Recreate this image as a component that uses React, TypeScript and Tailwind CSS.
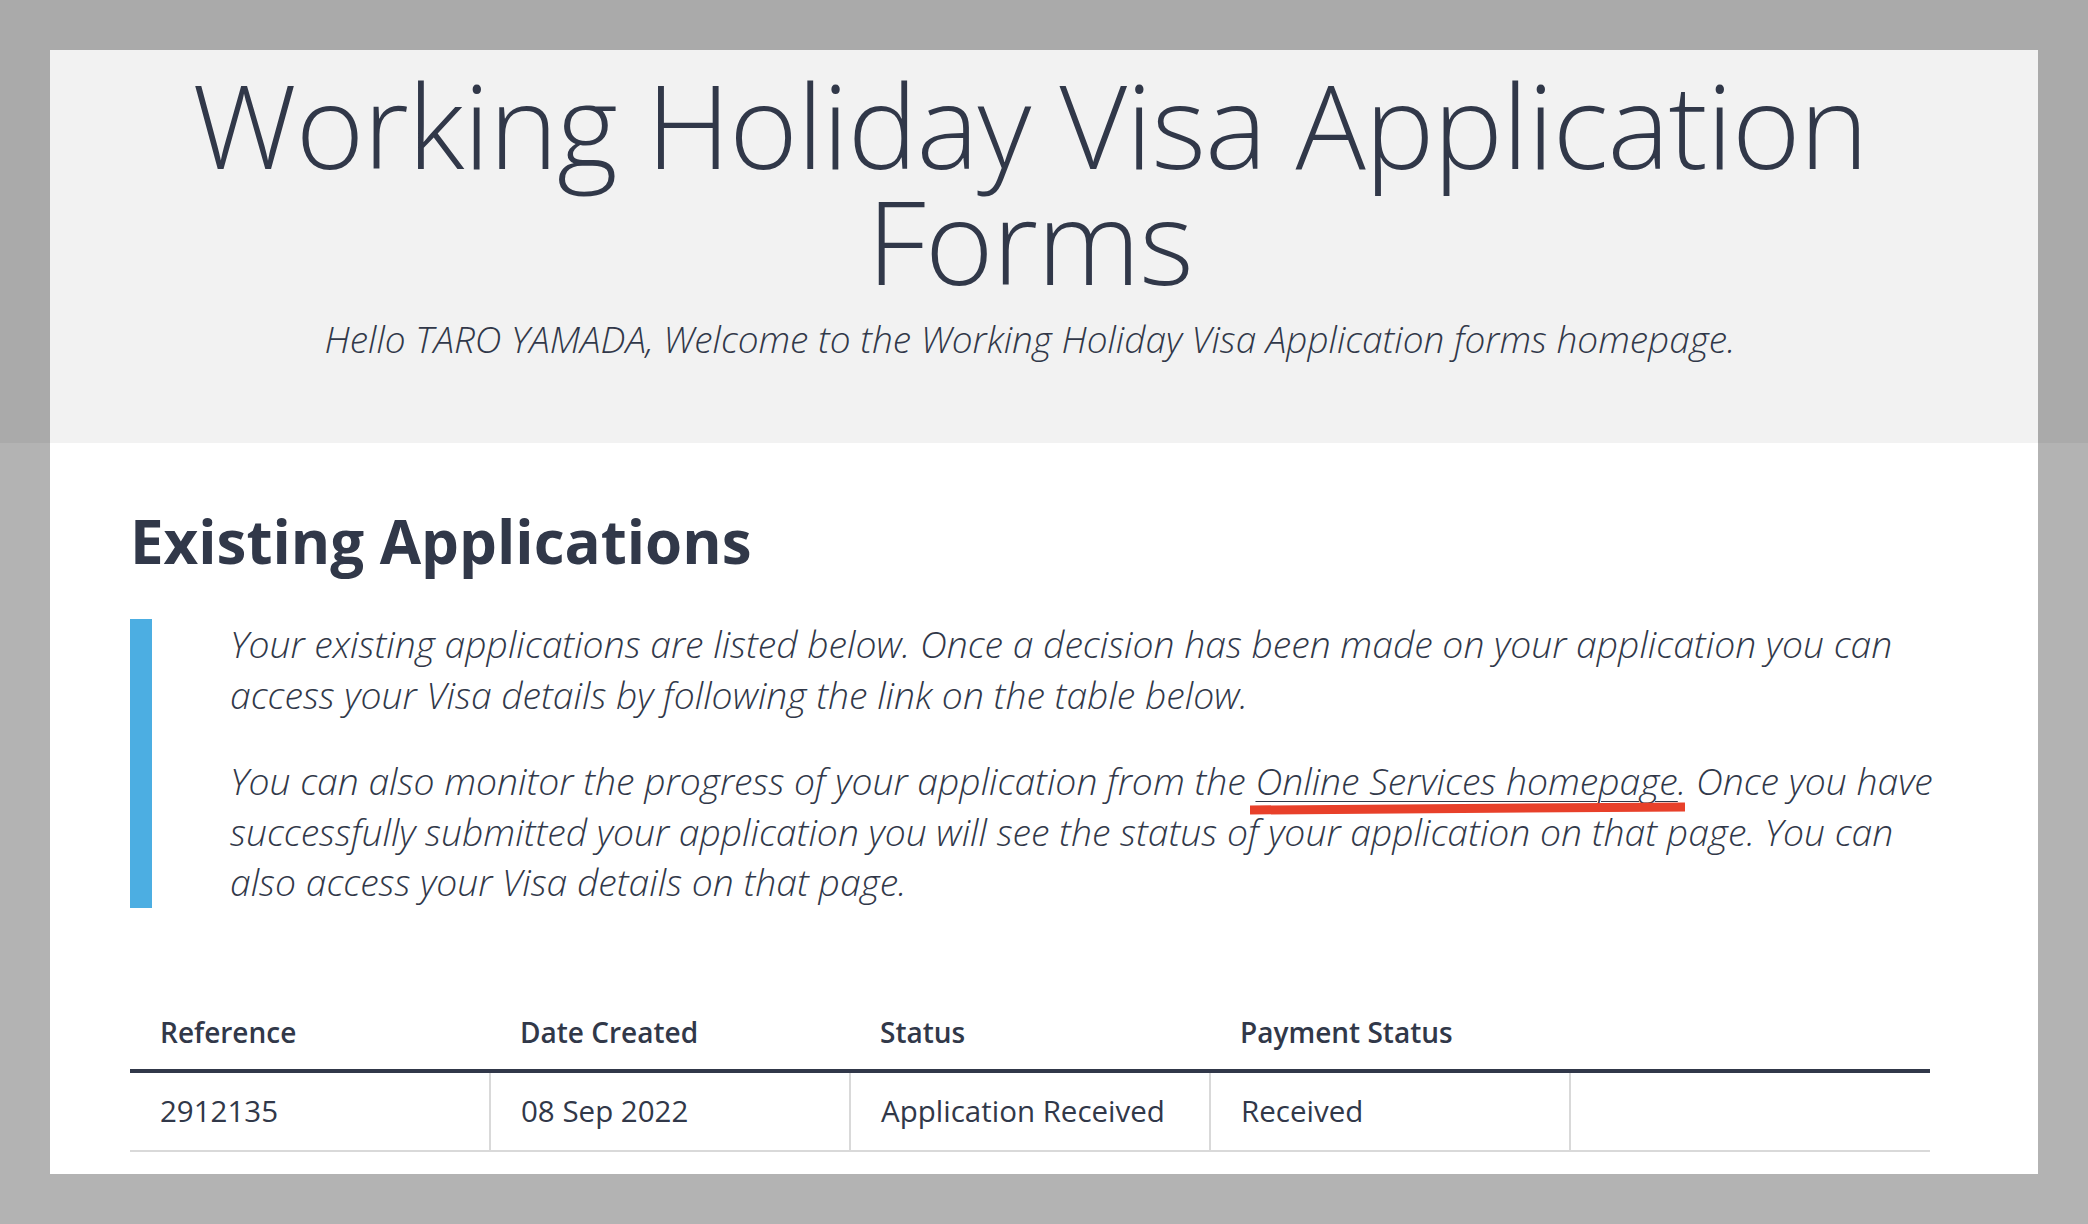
export default function App() {
  const font = { fontFamily: '"Open Sans", "Noto Sans", sans-serif' };
  return (
    <div
      className="min-h-[1224px] bg-[linear-gradient(to_bottom,#aaaaaa_443px,#b3b3b3_443px)] px-[50px] pt-[50px] pb-[51px] text-[#313849]"
      style={font}
    >
      <div className="bg-white">
        {/* page banner */}
        <header className="flex h-[393px] flex-col items-center bg-[#f2f2f2] pl-[80px] pr-[108px] pt-[16px] text-center">
          <h1 className="text-[117px] font-extralight leading-[116px] tracking-[-1px]">
            Working Holiday Visa Application
            <br />
            Forms
          </h1>
          <p className="mt-[19px] text-[37px] font-light italic leading-[44px]">
            Hello TARO YAMADA, Welcome to the Working Holiday Visa Application forms homepage.
          </p>
        </header>

        <main className="pl-[80px] pr-[108px] pb-[22px] pt-[66px]">
          <h2 className="text-[60px] font-bold leading-[64px]">Existing Applications</h2>

          <div className="mt-[46px] flex">
            <div className="w-[22px] shrink-0 bg-[#4caee2]" />
            <div className="whitespace-nowrap pl-[78px] text-[37.3px] font-light italic leading-[50.5px]">
              <p>
                Your existing applications are listed below. Once a decision has been made on your application you can
                <br />
                access your Visa details by following the link on the table below.
              </p>
              <p className="mt-[36px]">
                You can also monitor the progress of your application from the{' '}
                <a href="#" className="relative underline decoration-1 underline-offset-[6px]">
                  Online Services homepage
                  <span className="absolute -left-[5px] -right-[8px] top-[49px] h-[9px] -rotate-[0.4deg] bg-[#e8402a]" />
                </a>
                . Once you have
                <br />
                successfully submitted your application you will see the status of your application on that page. You can
                <br />
                also access your Visa details on that page.
              </p>
            </div>
          </div>

          <table className="mt-[103px] w-full table-fixed border-collapse text-left text-[29.5px]">
            <thead>
              <tr className="border-b-4 border-[#313849] text-[28px]">
                <th className="px-[30px] pb-[16px] font-semibold">Reference</th>
                <th className="px-[30px] pb-[16px] font-semibold">Date Created</th>
                <th className="px-[30px] pb-[16px] font-semibold">Status</th>
                <th className="px-[30px] pb-[16px] font-semibold">Payment Status</th>
                <th className="px-[30px] pb-[16px] font-semibold"></th>
              </tr>
            </thead>
            <tbody>
              <tr className="border-b-2 border-[#d9d9d9]">
                <td className="h-[80px] px-[30px]">2912135</td>
                <td className="h-[80px] border-l-2 border-[#d9d9d9] px-[30px]">08 Sep 2022</td>
                <td className="h-[80px] border-l-2 border-[#d9d9d9] px-[30px]">Application Received</td>
                <td className="h-[80px] border-l-2 border-[#d9d9d9] px-[30px]">Received</td>
                <td className="h-[80px] border-l-2 border-[#d9d9d9] px-[30px]"></td>
              </tr>
            </tbody>
          </table>
        </main>
      </div>
    </div>
  );
}
